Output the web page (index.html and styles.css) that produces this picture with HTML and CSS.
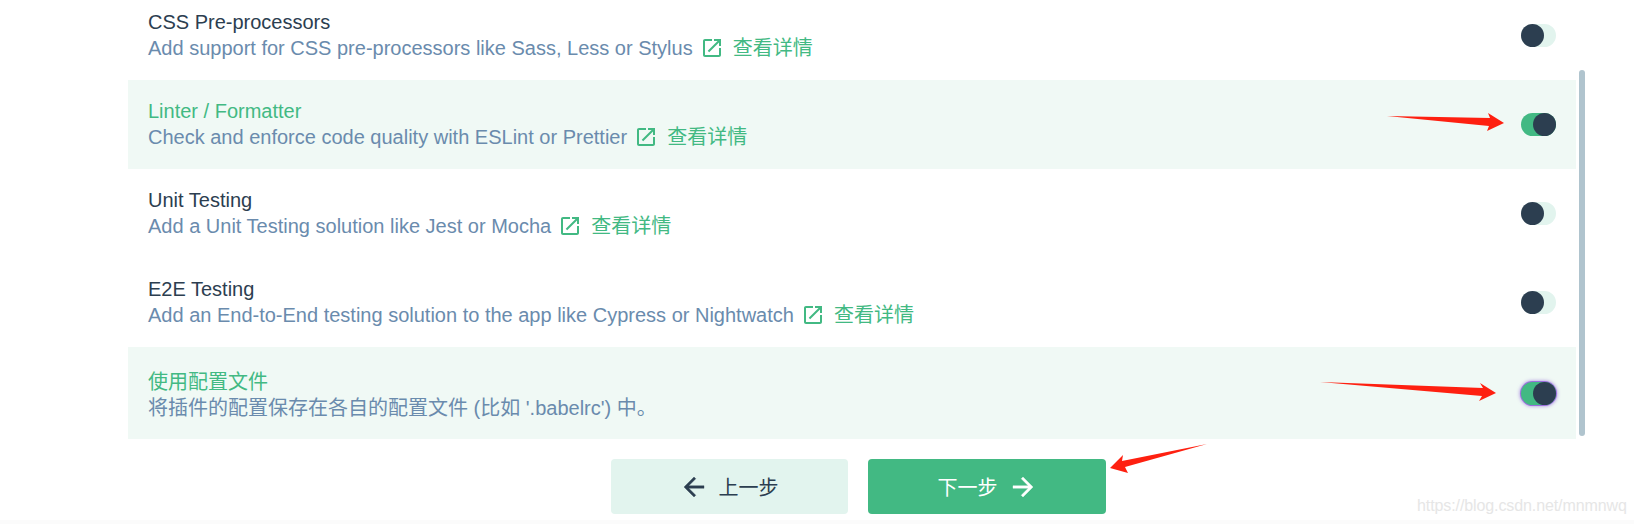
FILE: index.html
```html
<!DOCTYPE html>
<html lang="en">

<head>
    <meta charset="UTF-8">
    <meta name="viewport" content="width=device-width, initial-scale=1.0">
    <title>Vue UI features</title>
    <link rel="stylesheet" href="styles.css">
</head>

<body>
    <div class="page">
        <ul class="feature-list">
            <li class="feature">
                <div class="feature-info">
                    <div class="feature-name">CSS Pre-processors</div>
                    <div class="feature-desc">
                        <span>Add support for CSS pre-processors like Sass, Less or Stylus</span>
                        <svg class="link-icon" viewBox="0 0 24 24"><path d="M19 19H5V5h7V3H5c-1.11 0-2 .9-2 2v14c0 1.1.89 2 2 2h14c1.1 0 2-.9 2-2v-7h-2v7zM14 3v2h3.59l-9.83 9.83 1.41 1.41L19 6.41V10h2V3h-7z"/></svg>
                        <a class="more">查看详情</a>
                    </div>
                </div>
                <div class="toggle"><i></i></div>
            </li>
            <li class="feature selected">
                <div class="feature-info">
                    <div class="feature-name">Linter / Formatter</div>
                    <div class="feature-desc">
                        <span>Check and enforce code quality with ESLint or Prettier</span>
                        <svg class="link-icon" viewBox="0 0 24 24"><path d="M19 19H5V5h7V3H5c-1.11 0-2 .9-2 2v14c0 1.1.89 2 2 2h14c1.1 0 2-.9 2-2v-7h-2v7zM14 3v2h3.59l-9.83 9.83 1.41 1.41L19 6.41V10h2V3h-7z"/></svg>
                        <a class="more">查看详情</a>
                    </div>
                </div>
                <div class="toggle on"><i></i></div>
            </li>
            <li class="feature">
                <div class="feature-info">
                    <div class="feature-name">Unit Testing</div>
                    <div class="feature-desc">
                        <span>Add a Unit Testing solution like Jest or Mocha</span>
                        <svg class="link-icon" viewBox="0 0 24 24"><path d="M19 19H5V5h7V3H5c-1.11 0-2 .9-2 2v14c0 1.1.89 2 2 2h14c1.1 0 2-.9 2-2v-7h-2v7zM14 3v2h3.59l-9.83 9.83 1.41 1.41L19 6.41V10h2V3h-7z"/></svg>
                        <a class="more">查看详情</a>
                    </div>
                </div>
                <div class="toggle"><i></i></div>
            </li>
            <li class="feature">
                <div class="feature-info">
                    <div class="feature-name">E2E Testing</div>
                    <div class="feature-desc">
                        <span>Add an End-to-End testing solution to the app like Cypress or Nightwatch</span>
                        <svg class="link-icon" viewBox="0 0 24 24"><path d="M19 19H5V5h7V3H5c-1.11 0-2 .9-2 2v14c0 1.1.89 2 2 2h14c1.1 0 2-.9 2-2v-7h-2v7zM14 3v2h3.59l-9.83 9.83 1.41 1.41L19 6.41V10h2V3h-7z"/></svg>
                        <a class="more">查看详情</a>
                    </div>
                </div>
                <div class="toggle"><i></i></div>
            </li>
            <li class="feature selected last">
                <div class="feature-info">
                    <div class="feature-name">使用配置文件</div>
                    <div class="feature-desc">
                        <span>将插件的配置保存在各自的配置文件 (比如 '.babelrc') 中。</span>
                    </div>
                </div>
                <div class="toggle on focus"><i></i></div>
            </li>
        </ul>

        <div class="actions">
            <button class="btn btn-prev">
                <svg class="btn-icon" viewBox="0 0 24 24"><path d="M20 11H7.83l5.59-5.59L12 4l-8 8 8 8 1.41-1.41L7.83 13H20v-2z"/></svg>
                <span>上一步</span>
            </button>
            <button class="btn btn-next">
                <span>下一步</span>
                <svg class="btn-icon" viewBox="0 0 24 24"><path d="M12 4l-1.41 1.41L16.17 11H4v2h12.17l-5.58 5.59L12 20l8-8z"/></svg>
            </button>
        </div>

        <div class="scrollbar"></div>

        <!-- red arrows drawn on top of the screenshot -->
        <svg class="marks" viewBox="0 0 1634 524">
            <polygon points="1387,116 1490,118 1488,113 1504,123 1487,131 1489,126"/>
            <polygon points="1320,382 1483,388 1480,383 1496,393 1479,401 1482,396"/>
            <polygon points="1207,444 1122,461 1123,455 1110,468 1128,473 1125,467"/>
        </svg>

        <div class="watermark">https://blog.csdn.net/mnmnwq</div>
    </div>
</body>

</html>
```

FILE: styles.css
```css
html {
    background: #fbfbfb;
}

body {
    margin: 0;
    overflow: hidden;
    color: #2c3e50;
    font-family: "Liberation Sans", "Noto Sans CJK SC", sans-serif;
    font-size: 20px;
}

ul {
    margin: 0;
    padding: 0;
}

li {
    list-style: none;
}

.page {
    position: relative;
    height: 520px;
    background: #fff;
    overflow: hidden;
}

.feature-list {
    width: 1448px;
    margin: -9px 0 0 128px;
}

.feature {
    display: flex;
    flex-flow: row nowrap;
    align-items: center;
    justify-content: space-between;
    height: 89px;
    padding: 0 20px;
    box-sizing: border-box;
}

.feature.last {
    height: 92px;
}

.last .feature-info {
    padding-top: 6px;
}

.selected {
    background: #f0f9f5;
}

.selected .feature-name {
    color: #42b983;
}

.feature-name {
    line-height: 23px;
    margin-bottom: 2px;
}

.feature-desc {
    display: flex;
    align-items: center;
    height: 25px;
    line-height: 25px;
    color: #6a8bad;
}

.link-icon {
    width: 24px;
    height: 24px;
    margin-left: 7px;
    fill: #42b983;
}

.more {
    margin-left: 9px;
    color: #42b983;
}

.toggle {
    position: relative;
    width: 35px;
    height: 23px;
    border-radius: 12px;
    background: #e2f4ee;
}

.toggle i {
    position: absolute;
    top: 0;
    left: 0;
    width: 23px;
    height: 23px;
    border-radius: 50%;
    background: #2c3e50;
}

.toggle.on {
    background: #42b983;
}

.toggle.on i {
    left: 12px;
}

.toggle.focus {
    box-shadow: 0 0 0 1px #9a6fdc, 0 0 3px 2px rgba(154, 111, 220, .5);
}

.actions {
    display: flex;
    justify-content: center;
    gap: 20px;
    width: 495px;
    margin: 20px 0 0 611px;
}

.btn {
    display: flex;
    align-items: center;
    justify-content: center;
    gap: 10px;
    flex: 0 0 auto;
    height: 55px;
    padding: 0;
    border: 0;
    border-radius: 4px;
    font: inherit;
}

.btn-prev {
    width: 237px;
    padding-right: 2px;
    color: #2c3e50;
    background: #e2f4ee;
}

.btn-next {
    width: 238px;
    padding-left: 1px;
    color: #fff;
    background: #42b983;
}

.btn-icon {
    width: 30px;
    height: 30px;
    fill: currentColor;
    stroke: currentColor;
    stroke-width: .3;
}

.scrollbar {
    position: absolute;
    top: 70px;
    left: 1579px;
    width: 6px;
    height: 366px;
    border-radius: 3px;
    background: #b0c4ce;
}

.marks {
    position: absolute;
    top: 0;
    left: 0;
    width: 1634px;
    height: 524px;
    fill: #fe2010;
}

.watermark {
    position: absolute;
    top: 495px;
    left: 1417px;
    color: #e6e6e6;
    font-size: 16px;
    letter-spacing: -.1px;
    line-height: 22px;
}
```
